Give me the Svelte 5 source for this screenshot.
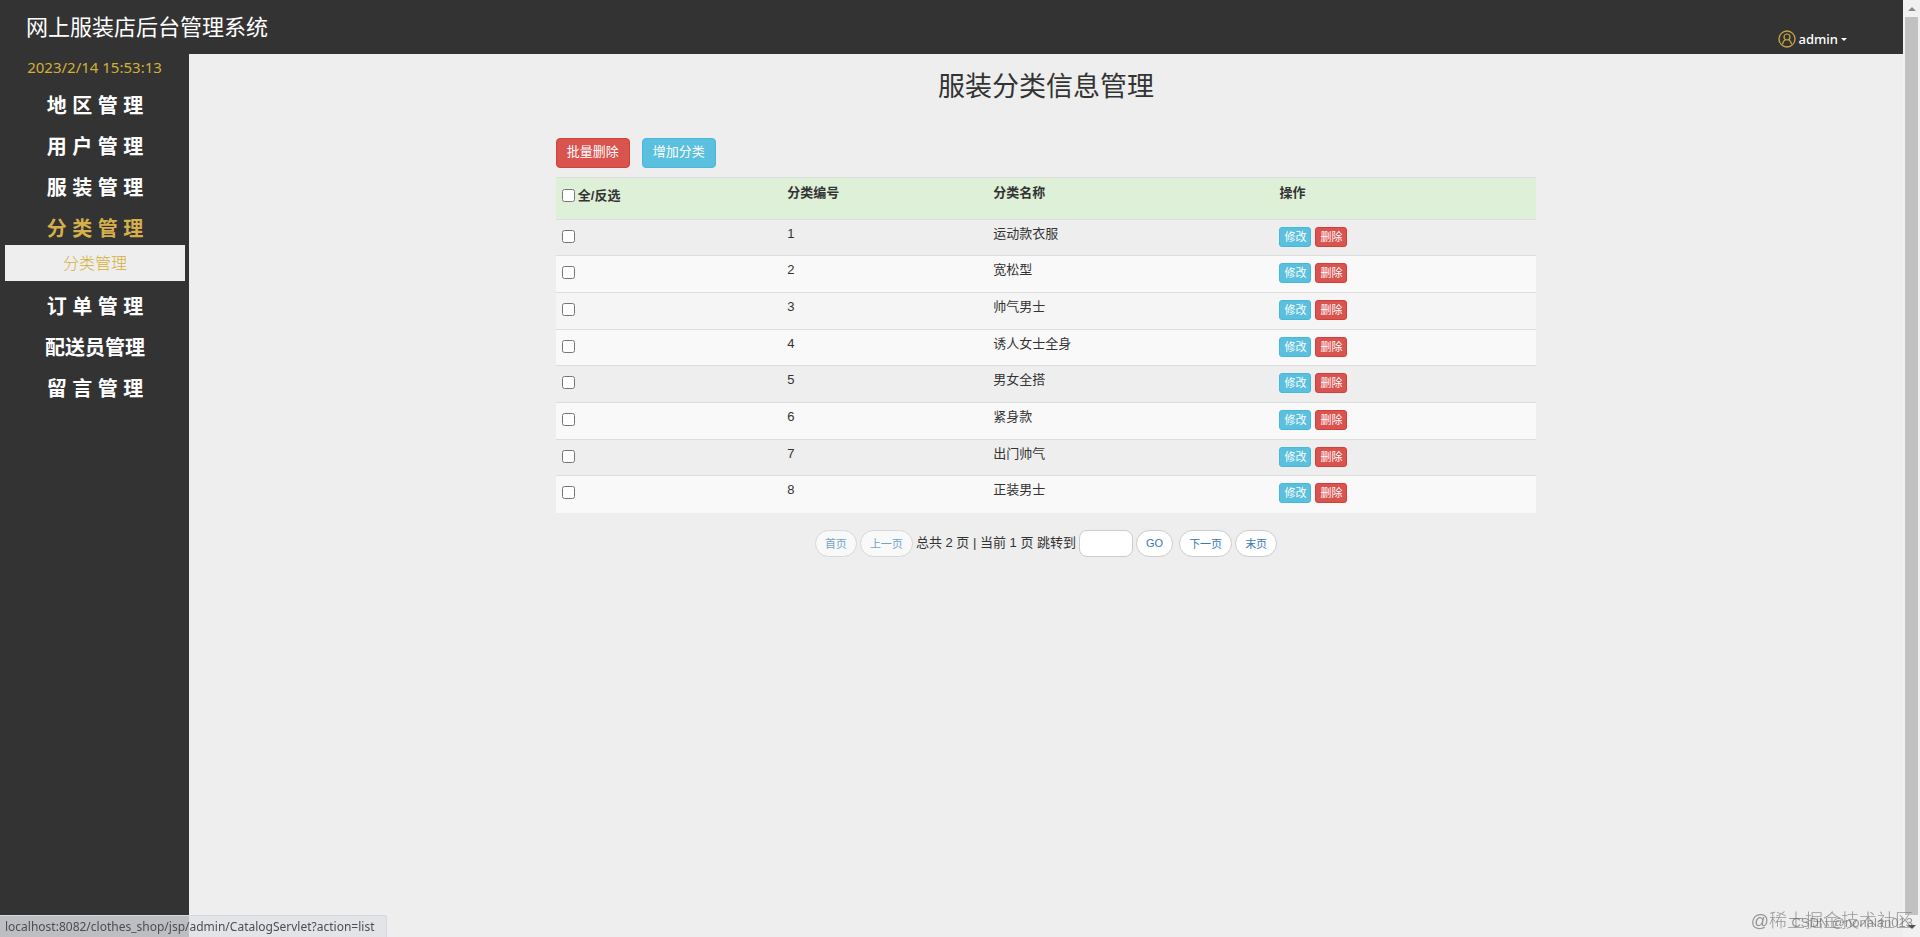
<script lang="ts">
	interface Catalog {
		id: number;
		name: string;
		checked: boolean;
	}

	const menus = [
		{ name: '地 区 管 理', items: ['地区管理'] },
		{ name: '用 户 管 理', items: ['用户管理'] },
		{ name: '服 装 管 理', items: ['服装管理'] },
		{ name: '分 类 管 理', items: ['分类管理'] },
		{ name: '订 单 管 理', items: ['订单管理'] },
		{ name: '配送员管理', items: ['配送员管理'] },
		{ name: '留 言 管 理', items: ['留言管理'] }
	];

	let opened = $state(3);

	let catalogs: Catalog[] = $state(
		['运动款衣服', '宽松型', '帅气男士', '诱人女士全身', '男女全搭', '紧身款', '出门帅气', '正装男士'].map(
			(name, i) => ({ id: i + 1, name, checked: false })
		)
	);

	let page = $state('');

	function toggleAll() {
		catalogs.forEach((c) => (c.checked = !c.checked));
	}
</script>

<div class="layout">
	<header>
		<h1>网上服装店后台管理系统</h1>
		<button class="user">
			<svg width="18" height="18" viewBox="0 0 18 18" fill="none" stroke="#c9a63f">
				<circle cx="9" cy="9" r="8" stroke-width="1.3" />
				<circle cx="9" cy="7" r="3" stroke-width="1.2" />
				<path d="M4.6 14.2c.2-2.4 1.4-3.8 2.9-4.5M13.4 14.2c-.2-2.4-1.4-3.8-2.9-4.5" stroke-width="1.2" />
			</svg>
			admin
			<span class="caret"></span>
		</button>
	</header>

	<aside>
		<div class="time">2023/2/14 15:53:13</div>
		<nav>
			{#each menus as menu, i}
				<button class="menu" class:active={opened === i} onclick={() => (opened = i)}>{menu.name}</button>
				{#if opened === i}
					{#each menu.items as item}
						<a class="sub" href="#list">{item}</a>
					{/each}
				{/if}
			{/each}
		</nav>
	</aside>

	<main>
		<h2>服装分类信息管理</h2>
		<div class="content">
			<div class="tools">
				<button class="btn danger">批量删除</button>
				<button class="btn info">增加分类</button>
			</div>

			<table>
				<thead>
					<tr>
						<th class="check">
							<label><input type="checkbox" onchange={toggleAll} /> 全/反选</label>
						</th>
						<th class="id">分类编号</th>
						<th class="name">分类名称</th>
						<th>操作</th>
					</tr>
				</thead>
				<tbody>
					{#each catalogs as catalog}
						<tr>
							<td><input type="checkbox" aria-label={catalog.name} bind:checked={catalog.checked} /></td>
							<td>{catalog.id}</td>
							<td>{catalog.name}</td>
							<td>
								<div class="actions">
									<button class="btn-xs info">修改</button>
									<button class="btn-xs danger">删除</button>
								</div>
							</td>
						</tr>
					{/each}
				</tbody>
			</table>

			<div class="pager">
				<button class="pill" disabled>首页</button>
				<button class="pill" disabled>上一页</button>
				<label for="page">总共 2 页 | 当前 1 页 跳转到</label>
				<input id="page" type="text" bind:value={page} />
				<button class="pill go">GO</button>
				<button class="pill">下一页</button>
				<button class="pill">末页</button>
			</div>
		</div>
	</main>

	<div class="scrollbar">
		<span class="up"></span>
		<span class="thumb"></span>
		<span class="down"></span>
	</div>
</div>

<div class="status">localhost:8082/clothes_shop/jsp/admin/CatalogServlet?action=list</div>
<div class="mark small">CSDN @nonalan013</div>
<div class="mark">@稀土掘金技术社区</div>

<style>
	:global(body) {
		margin: 0;
		background: #eee;
		color: #333;
		font: 13px/17px 'Liberation Sans', 'Noto Sans CJK SC', sans-serif;
	}
	button,
	input {
		font-family: inherit;
	}
	button {
		cursor: pointer;
	}
	.layout {
		display: grid;
		grid-template-columns: 189px 1fr 17px;
		grid-template-rows: 54px 1fr;
		min-height: 100vh;
	}

	header {
		grid-column: 1 / 3;
		display: flex;
		justify-content: space-between;
		background: #333;
		color: #fff;
	}
	h1 {
		margin: 0;
		padding-left: 26px;
		font-size: 22px;
		font-weight: 400;
		line-height: 56px;
	}
	.user {
		display: flex;
		align-items: center;
		gap: 3px;
		align-self: flex-start;
		height: 30px;
		margin: 24px 56px 0 0;
		padding: 0;
		border: 0;
		background: none;
		color: #fff;
		font: 500 13px 'Noto Sans', sans-serif;
	}
	.caret {
		border: 3px solid transparent;
		border-top-color: #fff;
		border-bottom: 0;
	}

	aside {
		background: #333;
		text-align: center;
	}
	.time {
		color: #d4af37;
		font: 15px/26px 'Noto Sans', sans-serif;
	}
	nav {
		display: flex;
		flex-direction: column;
		padding: 4px 4px 0 5px;
	}
	.menu {
		height: 41px;
		padding: 0;
		border: 0;
		background: none;
		color: #fff;
		font-size: 20px;
		font-weight: 700;
	}
	.menu.active {
		height: 38px;
		padding-top: 3px;
		color: #d4af4c;
	}
	.sub {
		box-sizing: border-box;
		height: 36px;
		margin-bottom: 4px;
		background: #eee;
		color: #d4af37;
		font-size: 16px;
		font-weight: 300;
		line-height: 38px;
		text-decoration: none;
	}

	h2 {
		margin: 13px 0 31px;
		font-size: 27px;
		font-weight: 400;
		line-height: 40px;
		text-align: center;
	}
	.content {
		width: 57.2%;
		margin: 0 auto;
	}
	.tools {
		display: flex;
		gap: 12px;
		margin-bottom: 9px;
	}
	.btn {
		height: 30px;
		padding: 0 10px 5px;
		border: 1px solid;
		border-radius: 4px;
		color: #fff;
		font-size: 13px;
	}
	.btn-xs {
		height: 20px;
		padding: 0 4px;
		border: 1px solid;
		border-radius: 3px;
		color: #fff;
		font-size: 11px;
		line-height: 18px;
	}
	.danger {
		border-color: #d43f3a;
		background: #d9534f;
	}
	.info {
		border-color: #46b8da;
		background: #5bc0de;
	}

	table {
		width: 100%;
		table-layout: fixed;
		border-collapse: collapse;
	}
	th,
	td {
		box-sizing: border-box;
		padding: 5px 6px 0;
		border-top: 1px solid #ddd;
		text-align: left;
		vertical-align: top;
	}
	th {
		height: 42px;
		padding-top: 6px;
		background: #dff0d8;
	}
	td {
		height: 37px;
	}
	tbody tr:nth-child(3n + 1) td {
		height: 36px;
	}
	.check {
		width: 23%;
	}
	.id {
		width: 21%;
	}
	.name {
		width: 29.2%;
	}
	th label {
		display: flex;
		align-items: center;
		gap: 3px;
		padding-top: 3px;
	}
	tbody tr:nth-child(even) {
		background: #f9f9f9;
	}
	tbody tr:nth-child(3) {
		background: #f5f5f5;
	}
	input[type='checkbox'] {
		width: 13px;
		height: 13px;
		margin: 0;
	}
	td input[type='checkbox'] {
		display: block;
		margin-top: 5px;
	}
	.actions {
		display: flex;
		gap: 4px;
		padding-top: 2px;
	}

	.pager {
		display: flex;
		justify-content: center;
		align-items: center;
		gap: 3px;
		margin-top: 17px;
	}
	.pager label {
		padding-bottom: 2px;
	}
	.pill {
		height: 27px;
		padding: 0 9px;
		border: 1px solid #ccc;
		border-radius: 14px;
		background: #fff;
		color: #337ab7;
		font-size: 11px;
	}
	.pill:disabled {
		opacity: 0.65;
	}
	.go {
		margin-right: 3px;
	}
	#page {
		box-sizing: border-box;
		width: 54px;
		height: 27px;
		border: 1px solid #ccc;
		border-radius: 8px;
		background: #fff;
	}

	.scrollbar {
		grid-column: 3;
		grid-row: 1 / 3;
		display: flex;
		flex-direction: column;
		align-items: center;
		background: #f1f1f1;
	}
	.up,
	.down {
		border: 4px solid transparent;
	}
	.up {
		margin: 3px 0 6px;
		border-bottom-color: #8b8b8b;
	}
	.thumb {
		flex: 1;
		width: 13px;
		background: #c1c1c1;
	}
	.down {
		margin: 10px 0 4px;
		border-top-color: #505050;
	}

	.status {
		position: fixed;
		left: 0;
		bottom: 0;
		padding: 0 12px 0 5px;
		border: solid #d5d8dc;
		border-width: 1px 1px 0 0;
		border-radius: 0 3px 0 0;
		background: rgba(222, 225, 230, 0.8);
		color: #4a4d51;
		font: 12px/21px 'Noto Sans', sans-serif;
	}
	.mark {
		position: fixed;
		right: 7px;
		bottom: 3px;
		color: rgba(90, 90, 90, 0.6);
		font-size: 18px;
		font-weight: 300;
		line-height: 26px;
	}
	.mark.small {
		font-size: 13px;
		line-height: 22px;
	}
</style>
